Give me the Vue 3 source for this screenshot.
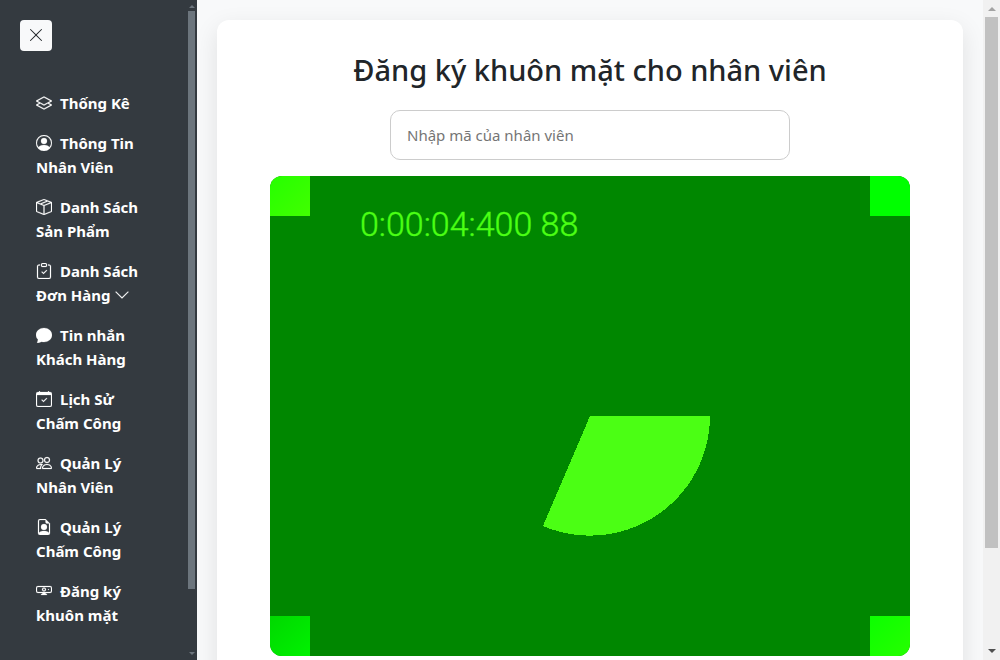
<script setup>
import { ref } from 'vue'

const employeeCode = ref('')

const check = 'M10.854 7.146a.5.5 0 0 1 0 .708l-3 3a.5.5 0 0 1-.708 0l-1.5-1.5a.5.5 0 1 1 .708-.708L7.5 9.793l2.646-2.647a.5.5 0 0 1 .708 0'
const chevron = 'M1.646 4.646a.5.5 0 0 1 .708 0L8 10.293l5.646-5.647a.5.5 0 0 1 .708.708l-6 6a.5.5 0 0 1-.708 0l-6-6a.5.5 0 0 1 0-.708'

const items = [
  {
    label: 'Thống Kê',
    paths: ['M8.235 1.559a.5.5 0 0 0-.47 0l-7.5 4a.5.5 0 0 0 0 .882L3.188 8 .264 9.559a.5.5 0 0 0 0 .882l7.5 4a.5.5 0 0 0 .47 0l7.5-4a.5.5 0 0 0 0-.882L12.813 8l2.922-1.559a.5.5 0 0 0 0-.882zm3.515 7.008L14.438 10 8 13.433 1.562 10 4.25 8.567l3.515 1.874a.5.5 0 0 0 .47 0zM8 9.433 1.562 6 8 2.567 14.438 6z'],
  },
  {
    label: 'Thông Tin Nhân Viên',
    paths: [
      'M11 6a3 3 0 1 1-6 0 3 3 0 0 1 6 0',
      'M0 8a8 8 0 1 1 16 0A8 8 0 0 1 0 8m8-7a7 7 0 0 0-5.468 11.37C3.242 11.226 4.805 10 8 10s4.757 1.225 5.468 2.37A7 7 0 0 0 8 1',
    ],
  },
  {
    label: 'Danh Sách Sản Phẩm',
    paths: ['M8.186 1.113a.5.5 0 0 0-.372 0L1.846 3.5l2.404.961L10.404 2zm3.564 1.426L5.596 5 8 5.961 14.154 3.5zm3.25 1.7-6.5 2.6v7.922l6.5-2.6V4.24zM7.5 14.762V6.838L1 4.239v7.923zM7.443.184a1.5 1.5 0 0 1 1.114 0l7.129 2.852A.5.5 0 0 1 16 3.5v8.662a1 1 0 0 1-.629.928l-7.185 2.874a.5.5 0 0 1-.372 0L.63 13.09a1 1 0 0 1-.63-.928V3.5a.5.5 0 0 1 .314-.464z'],
  },
  {
    label: 'Danh Sách Đơn Hàng',
    expandable: true,
    paths: [
      check,
      'M4 1.5H3a2 2 0 0 0-2 2V14a2 2 0 0 0 2 2h10a2 2 0 0 0 2-2V3.5a2 2 0 0 0-2-2h-1v1h1a1 1 0 0 1 1 1V14a1 1 0 0 1-1 1H3a1 1 0 0 1-1-1V3.5a1 1 0 0 1 1-1h1z',
      'M9.5 1a.5.5 0 0 1 .5.5v1a.5.5 0 0 1-.5.5h-3a.5.5 0 0 1-.5-.5v-1a.5.5 0 0 1 .5-.5zm-3-1A1.5 1.5 0 0 0 5 1.5v1A1.5 1.5 0 0 0 6.5 4h3A1.5 1.5 0 0 0 11 2.5v-1A1.5 1.5 0 0 0 9.5 0z',
    ],
  },
  {
    label: 'Tin nhắn Khách Hàng',
    paths: ['M8 15c4.418 0 8-3.134 8-7s-3.582-7-8-7-8 3.134-8 7c0 1.76.743 3.37 1.97 4.6-.097 1.016-.417 2.13-.771 2.966-.079.186.074.394.273.362 2.256-.37 3.597-.938 4.18-1.234A9 9 0 0 0 8 15'],
  },
  {
    label: 'Lịch Sử Chấm Công',
    paths: [
      check,
      'M3.5 0a.5.5 0 0 1 .5.5V1h8V.5a.5.5 0 0 1 1 0V1h1a2 2 0 0 1 2 2v11a2 2 0 0 1-2 2H2a2 2 0 0 1-2-2V3a2 2 0 0 1 2-2h1V.5a.5.5 0 0 1 .5-.5M1 4v10a1 1 0 0 0 1 1h12a1 1 0 0 0 1-1V4z',
    ],
  },
  {
    label: 'Quản Lý Nhân Viên',
    paths: ['M15 14s1 0 1-1-1-4-5-4-5 3-5 4 1 1 1 1zm-7.978-1L7 12.996c.001-.264.167-1.03.76-1.72C8.312 10.629 9.282 10 11 10c1.717 0 2.687.63 3.24 1.276.593.69.758 1.457.76 1.72l-.008.002-.014.002zM11 7a2 2 0 1 0 0-4 2 2 0 0 0 0 4m3-2a3 3 0 1 1-6 0 3 3 0 0 1 6 0M6.936 9.28a6 6 0 0 0-1.23-.247A7 7 0 0 0 5 9c-4 0-5 3-5 4q0 1 1 1h4.216A2.24 2.24 0 0 1 5 13c0-1.01.377-2.042 1.09-2.904.243-.294.526-.569.846-.816M4.92 10A5.5 5.5 0 0 0 4 13H1c0-.26.164-1.03.76-1.724.545-.636 1.492-1.256 3.16-1.275ZM1.5 5.5a3 3 0 1 1 6 0 3 3 0 0 1-6 0m3-2a2 2 0 1 0 0 4 2 2 0 0 0 0-4'],
  },
  {
    label: 'Quản Lý Chấm Công',
    paths: [
      'M11 8a3 3 0 1 1-6 0 3 3 0 0 1 6 0',
      'M14 14V4.5L9.5 0H4a2 2 0 0 0-2 2v12a2 2 0 0 0 2 2h8a2 2 0 0 0 2-2M9.5 3A1.5 1.5 0 0 0 11 4.5h2v9.255S12 12 8 12s-5 1.755-5 1.755V2a1 1 0 0 1 1-1h5.5z',
    ],
  },
  {
    label: 'Đăng ký khuôn mặt',
    paths: [
      'M0 5a2 2 0 0 1 2-2h12a2 2 0 0 1 2 2v3a2 2 0 0 1-2 2H9.269c.144.162.33.324.531.475a7 7 0 0 0 .907.57l.014.006.003.002A.5.5 0 0 1 10.5 12h-5a.5.5 0 0 1-.224-.947l.003-.002.014-.007a4 4 0 0 0 .268-.148 7 7 0 0 0 .639-.421c.2-.15.387-.313.531-.475H2a2 2 0 0 1-2-2zm2-1a1 1 0 0 0-1 1v3a1 1 0 0 0 1 1h12a1 1 0 0 0 1-1V5a1 1 0 0 0-1-1z',
      'M8 5.5a1 1 0 1 0 0 2 1 1 0 0 0 0-2m-2 1a2 2 0 1 1 4 0 2 2 0 0 1-4 0M12 6.5a.5.5 0 1 1 1 0 .5.5 0 0 1-1 0',
    ],
  },
]
</script>

<template>
  <div class="layout">
    <aside class="sidebar">
      <div class="sidebar-body">
        <button class="close" type="button" aria-label="Đóng">
          <svg class="icon" viewBox="0 0 16 16" aria-hidden="true">
            <path d="M2.146 2.854a.5.5 0 1 1 .708-.708L8 7.293l5.146-5.147a.5.5 0 0 1 .708.708L8.707 8l5.147 5.146a.5.5 0 0 1-.708.708L8 8.707l-5.146 5.147a.5.5 0 0 1-.708-.708L7.293 8z" />
          </svg>
        </button>
        <nav class="menu">
          <a v-for="item in items" :key="item.label" class="menu-link" href="#">
            <svg class="icon lead" viewBox="0 0 16 16" aria-hidden="true">
              <path v-for="d in item.paths" :key="d" :d="d" fill-rule="evenodd" />
            </svg>{{ item.label }}<template v-if="item.expandable">&nbsp;<svg class="icon" viewBox="0 0 16 16" aria-hidden="true"><path :d="chevron" /></svg></template>
          </a>
        </nav>
      </div>
      <div class="rail rail-dark" aria-hidden="true">
        <span class="arrow up"></span>
        <div class="track"><div class="thumb"></div></div>
        <span class="arrow down"></span>
      </div>
    </aside>

    <main class="content">
      <section class="card">
        <h2 class="title">Đăng ký khuôn mặt cho nhân viên</h2>
        <input v-model="employeeCode" class="code" type="text" placeholder="Nhập mã của nhân viên" aria-label="Nhập mã của nhân viên" />
        <svg class="video" viewBox="0 0 640 480" role="img" aria-label="Camera">
          <defs>
            <linearGradient id="tl" x2="1" y2="1"><stop offset="0" stop-color="#26ff00" /><stop offset="1" stop-color="#41ff00" /></linearGradient>
            <linearGradient id="bl" x2="1" y2="1"><stop offset="0" stop-color="#00d800" /><stop offset="1" stop-color="#00f200" /></linearGradient>
            <linearGradient id="br" x2="1" y2="1"><stop offset="0" stop-color="#0cff00" /><stop offset="1" stop-color="#26ff00" /></linearGradient>
          </defs>
          <rect width="640" height="480" fill="#008700" />
          <rect width="40" height="40" fill="url(#tl)" />
          <rect x="600" width="40" height="40" fill="#00ff00" />
          <rect y="440" width="40" height="40" fill="url(#bl)" />
          <rect x="600" y="440" width="40" height="40" fill="url(#br)" />
          <path d="M320 240H440A120 120 0 0 1 273 350Z" fill="#4bff14" shape-rendering="crispEdges" />
          <text class="timer" x="90" y="60">0:00:04:400 88</text>
        </svg>
      </section>
    </main>

    <div class="rail rail-light" aria-hidden="true">
      <span class="arrow up"></span>
      <div class="track"><div class="thumb"></div></div>
      <span class="arrow down"></span>
    </div>
  </div>
</template>

<style>
body {
  margin: 0;
  overflow: hidden;
}
</style>

<style scoped>
.layout {
  display: flex;
  height: 100vh;
  overflow: hidden;
  background: #f8f9fa;
  color: #212529;
  font-family: "Segoe UI", "Noto Sans", "Open Sans", sans-serif;
  font-size: 15px;
  line-height: 24px;
}
.sidebar {
  display: flex;
  flex: 0 0 197px;
  background: #343a40;
}
.sidebar-body {
  flex: 1;
  min-width: 0;
  padding: 20px;
}
.icon {
  width: 16px;
  height: 16px;
  fill: currentColor;
  vertical-align: -2px;
}
.close {
  display: block;
  width: 32px;
  height: 31px;
  padding: 0;
  border: 0;
  border-radius: 4px;
  background: #f8f9fa;
  color: #212529;
}
.menu {
  display: flex;
  flex-direction: column;
  margin-top: 32px;
}
.menu-link {
  padding: 8px 16px;
  color: #fff;
  font-weight: 700;
  text-decoration: none;
}
.menu-link .icon {
  stroke: currentColor;
  stroke-width: 0.2;
}
.lead {
  margin-right: 8px;
}
.content {
  flex: 1;
  min-width: 0;
  padding: 20px;
}
.card {
  display: flex;
  flex-direction: column;
  align-items: center;
  padding: 30px;
  border-radius: 12px;
  background: #fff;
  box-shadow: 0 8px 24px rgba(0, 0, 0, 0.1);
}
.title {
  margin: 0 0 20px;
  font-size: 29px;
  font-weight: 500;
  line-height: 40px;
}
.code {
  box-sizing: border-box;
  width: 100%;
  max-width: 400px;
  height: 50px;
  margin-bottom: 16px;
  padding: 12px 16px;
  border: 1px solid #ccc;
  border-radius: 10px;
  background: #fff;
  color: #212529;
  font: inherit;
}
.code::placeholder {
  color: #757575;
}
.video {
  display: block;
  width: 100%;
  max-width: 640px;
  margin-bottom: 16px;
  border-radius: 12px;
}
.timer {
  fill: #4bff14;
  stroke: #4bff14;
  stroke-width: 0.4;
  font-family: Roboto, "Open Sans", sans-serif;
  font-size: 34px;
  font-weight: 300;
}
.rail {
  display: flex;
  flex-direction: column;
  align-items: center;
}
.rail-dark {
  width: 10px;
  padding: 5px 0;
  color: #6c757d;
}
.rail-light {
  width: 17px;
  padding: 7px 0;
  background: #f1f1f1;
  color: #505050;
}
.track {
  flex: 1;
  align-self: stretch;
}
.rail-dark .track {
  margin: 3px 2px 3px 1px;
}
.rail-light .track {
  margin: 6px 2px;
}
.thumb {
  width: 100%;
}
.rail-dark .thumb {
  height: 90.6%;
  background: #6c757d;
}
.rail-light .thumb {
  height: 84.8%;
  background: #c1c1c1;
}
.arrow {
  border: 4px solid transparent;
}
.rail-dark .arrow {
  border-width: 3px;
}
.up {
  border-top-width: 0;
  border-bottom-color: currentColor;
}
.rail-dark .up {
  border-top-width: 0;
}
.rail-light .up {
  border-bottom-color: #a3a3a3;
}
.down {
  border-bottom-width: 0;
  border-top-color: currentColor;
}
.rail-dark .down {
  border-bottom-width: 0;
}
</style>
